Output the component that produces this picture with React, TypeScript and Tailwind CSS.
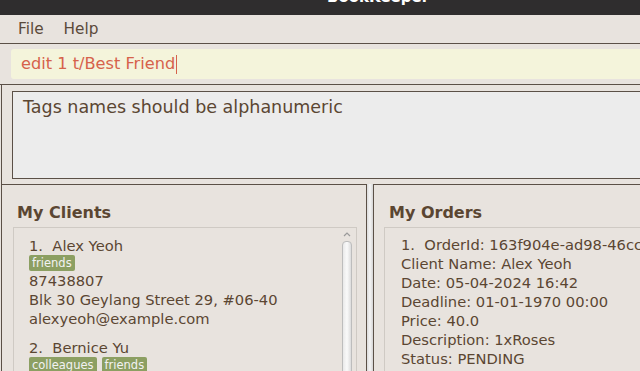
import React from "react";

const font = { fontFamily: '"DejaVu Sans", "Liberation Sans", sans-serif' };

function Tag({ children }: { children: React.ReactNode }) {
  return (
    <span className="inline-block rounded-[2px] bg-[#8c9f62] px-[3px] text-[11.5px] leading-[16px] text-[#f2f2f2]">
      {children}
    </span>
  );
}

export default function App() {
  return (
    <div
      className="w-[640px] h-[371px] overflow-hidden bg-[#e8e3de] text-[#5b4632] flex flex-col"
      style={font}
    >
      {/* title bar */}
      <div className="h-[15px] shrink-0 bg-[#2f2d2e] relative overflow-hidden">
        <div className="absolute left-[327px] top-[-10px] text-[15px] font-bold leading-[15px] text-white">
          BookKeeper
        </div>
      </div>
      {/* menu */}
      <div className="h-[28px] shrink-0 flex items-center gap-[20px] pl-[18px] text-[15.3px] text-[#5b4a3a]">
        <span>File</span>
        <span>Help</span>
      </div>
      {/* command box */}
      <div className="h-[42px] shrink-0 border-y border-[#5b5047] pl-[11px] pt-[5px]">
        <div className="h-[30px] w-[640px] rounded-[3px] bg-[#f4f4db] flex items-center pl-[10px] pt-[1px] text-[16.2px] text-[#d6624b]">
          <span>edit 1 t/Best Friend</span>
          <span className="ml-[1px] inline-block h-[19px] w-[1px] bg-[#d6624b]" />
        </div>
      </div>
      {/* result display */}
      <div className="h-[99px] shrink-0 border-l border-[#5b5047] ml-[1px] pl-[10px] pt-[6px]">
        <div className="h-[88px] w-[640px] border border-[#5b5047] bg-[#ececec] pl-[10px] pt-[5px] text-[17.5px] leading-[21px]">
          Tags names should be alphanumeric
        </div>
      </div>
      {/* bottom panels */}
      <div className="flex flex-1 pl-[1px]">
        <div className="w-[366px] shrink-0 border-l border-t border-r border-[#5b5047] pl-[11px] pt-[18px]">
          <div className="text-[16px] font-bold leading-[20px] pl-[4px]">My Clients</div>
          <div className="mt-[4px] w-[344px] h-[200px] border border-[#cfcac4] flex">
            <div className="flex-1 pl-[15px] pt-[8px] text-[14.7px] leading-[19px]">
              <div>1.&nbsp; Alex Yeoh</div>
              <div className="flex gap-[4px] h-[16px] items-start">
                <Tag>friends</Tag>
              </div>
              <div>87438807</div>
              <div>Blk 30 Geylang Street 29, #06-40</div>
              <div>alexyeoh@example.com</div>
              <div className="mt-[10px]">2.&nbsp; Bernice Yu</div>
              <div className="flex gap-[5px] h-[16px] items-start">
                <Tag>colleagues</Tag>
                <Tag>friends</Tag>
              </div>
            </div>
            <div className="w-[14px] mr-[2px] flex flex-col items-center">
              <svg width="10" height="12" viewBox="0 0 10 12" className="mt-[1px]">
                <path d="M2 7 L5 4 L8 7" fill="none" stroke="#9a9a9a" strokeWidth="1.2" />
              </svg>
              <div className="w-[10px] flex-1 rounded-t-[4px] border border-[#bdbdbd] bg-gradient-to-r from-[#e9e9e9] via-[#fafafa] to-[#dcdcdc]" />
            </div>
          </div>
        </div>
        <div className="w-[6px] shrink-0 bg-gradient-to-r from-[#dcdcdc] via-[#f5f5f5] to-[#d4d4d4]" />
        <div className="flex-1 border-l border-t border-[#5b5047] pl-[10px] pt-[18px] overflow-hidden">
          <div className="text-[16px] font-bold leading-[20px] pl-[5px]">My Orders</div>
          <div className="mt-[4px] w-[300px] h-[200px] border border-[#cfcac4] pl-[16px] pt-[7px] text-[14.7px] leading-[19px] whitespace-nowrap overflow-hidden">
            <div>1.&nbsp; OrderId: 163f904e-ad98-46cc</div>
            <div>Client Name: Alex Yeoh</div>
            <div>Date: 05-04-2024 16:42</div>
            <div>Deadline: 01-01-1970 00:00</div>
            <div>Price: 40.0</div>
            <div>Description: 1xRoses</div>
            <div>Status: PENDING</div>
          </div>
        </div>
      </div>
    </div>
  );
}
